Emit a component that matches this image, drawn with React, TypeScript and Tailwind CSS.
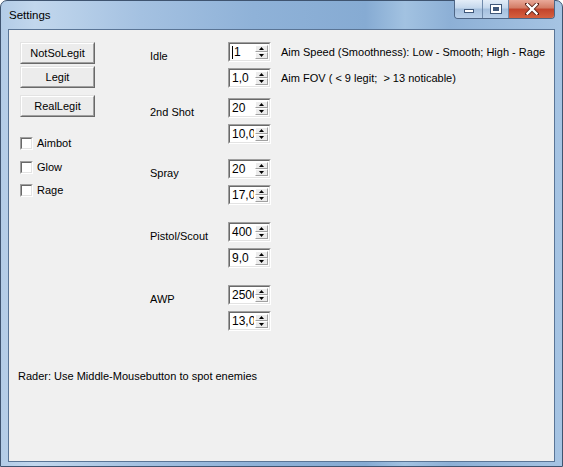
const font = { fontFamily: '"Liberation Sans", Arial, sans-serif' }

function Spin({ value, caret }: { value: string; caret?: boolean }) {
  return (
    <div className="w-[43px] h-[20px] border border-t-[#a0a0a0] border-l-[#a0a0a0] border-b-white border-r-white">
      <div className="h-full w-full flex bg-white border border-t-[#696969] border-l-[#696969] border-b-[#e3e3e3] border-r-[#e3e3e3]">
        <div className="flex-1 overflow-hidden whitespace-nowrap flex items-center pl-[2px] text-[12px] leading-[14px] text-black">
          {caret && <span className="w-px h-[13px] bg-black mr-[1px]" />}
          {value}
        </div>
        <div className="w-[15px] flex flex-col p-px bg-white">
          <SpinBtn up />
          <SpinBtn />
        </div>
      </div>
    </div>
  )
}

function SpinBtn({ up }: { up?: boolean }) {
  return (
    <div className="flex-1 flex items-center justify-center bg-[#ececec] border border-t-white border-l-white border-b-[#a0a0a0] border-r-[#a0a0a0]">
      <svg width="5" height="3" viewBox="0 0 5 3">
        {up ? <path d="M0 3 L2.5 0 L5 3 Z" fill="#000" /> : <path d="M0 0 L2.5 3 L5 0 Z" fill="#000" />}
      </svg>
    </div>
  )
}

function Btn({ label, className = '' }: { label: string; className?: string }) {
  return (
    <div className={`w-[75px] h-[22px] border border-t-[#e3e3e3] border-l-[#e3e3e3] border-b-[#696969] border-r-[#696969] ${className}`}>
      <div className="h-full w-full flex items-center justify-center bg-[#ececec] border border-t-white border-l-white border-b-[#a0a0a0] border-r-[#a0a0a0] text-[11px] text-black">
        {label}
      </div>
    </div>
  )
}

function Check({ label, className = '' }: { label: string; className?: string }) {
  return (
    <div className={`flex items-center h-[13px] ${className}`}>
      <div className="w-[13px] h-[13px] border border-t-[#a0a0a0] border-l-[#a0a0a0] border-b-white border-r-white">
        <div className="h-full w-full bg-white border border-t-[#696969] border-l-[#696969] border-b-[#e3e3e3] border-r-[#e3e3e3]" />
      </div>
      <span className="ml-[4px] text-[11px] leading-[13px] text-black">{label}</span>
    </div>
  )
}

function Group({
  label,
  a,
  b,
  caret,
  descA,
  descB,
  className = '',
}: {
  label: string
  a: string
  b: string
  caret?: boolean
  descA?: string
  descB?: string
  className?: string
}) {
  return (
    <div className={`flex ${className}`}>
      <div className="w-[78px] pt-[8px] text-[11px] leading-[13px] text-black">{label}</div>
      <div className="flex flex-col gap-[6px]">
        <div className="flex items-center">
          <Spin value={a} caret={caret} />
          {descA && <span className="ml-[10px] text-[11px] leading-[13px] text-black whitespace-pre">{descA}</span>}
        </div>
        <div className="flex items-center">
          <Spin value={b} />
          {descB && <span className="ml-[10px] text-[11px] leading-[13px] text-black whitespace-pre">{descB}</span>}
        </div>
      </div>
    </div>
  )
}

function WinControls() {
  return (
    <div className="flex h-[19px] -mt-px rounded-b-[4px] border border-t-0 border-[#4e6686] overflow-hidden">
      <div className="w-[28px] flex items-center justify-center bg-[linear-gradient(#e3edf8,#c4d7ec_45%,#a4bfdd_50%,#b9d0ea)] border-r border-[#6f8aab]">
        <div className="w-[10px] h-[4px] bg-white border border-[#40587a] mt-[4px]" />
      </div>
      <div className="w-[26px] flex items-center justify-center bg-[linear-gradient(#e3edf8,#c4d7ec_45%,#a4bfdd_50%,#b9d0ea)] border-r border-[#6f8aab]">
        <div className="w-[10px] h-[8px] border-2 border-white outline outline-1 outline-[#40587a] bg-[#40587a]" />
      </div>
      <div className="w-[45px] flex items-center justify-center bg-[linear-gradient(#e9a999,#d27a63_45%,#c2432b_50%,#d5603f)]">
        <svg width="14" height="12" viewBox="0 0 14 12">
          <path d="M2 1 L12 11 M12 1 L2 11" stroke="#5a2218" strokeWidth="4" strokeLinecap="square" />
          <path d="M2.5 1.5 L11.5 10.5 M11.5 1.5 L2.5 10.5" stroke="#ffffff" strokeWidth="2.4" strokeLinecap="square" />
        </svg>
      </div>
    </div>
  )
}

export default function App() {
  return (
    <div style={font} className="w-[563px] h-[467px] flex flex-col rounded-t-[7px] border border-[#3f5470] px-[7px] pb-[4px] bg-[linear-gradient(90deg,#b3cce7,#c2d7ed_6%,#a4c1e1_25%,#8fb2d8_45%,#86abd3_65%,#a2c2e1_72%,#8db0d6_80%,#a6c4e3_100%)]">
      <div className="h-[28px] flex justify-between">
        <span className="pt-[7px] pl-px text-[11.5px] leading-[14px] text-black">Settings</span>
        <WinControls />
      </div>
      <div className="flex-1 flex flex-col border border-[#5a7596] bg-[#f0f0f0]">
        <div className="flex pt-[12px] ml-[11px]">
          <div className="w-[130px] flex flex-col">
            <Btn label="NotSoLegit" />
            <Btn label="Legit" className="mt-[2px]" />
            <Btn label="RealLegit" className="mt-[7px]" />
            <Check label="Aimbot" className="mt-[20px]" />
            <Check label="Glow" className="mt-[11px]" />
            <Check label="Rage" className="mt-[10px]" />
          </div>
          <div className="flex flex-col">
            <Group
              label="Idle"
              a="1"
              b="1,0"
              caret
              descA="Aim Speed (Smoothness): Low - Smooth; High - Rage"
              descB="Aim FOV ( < 9 legit;  > 13 noticable)"
            />
            <Group label="2nd Shot" a="20" b="10,0" className="mt-[10px]" />
            <Group label="Spray" a="20" b="17,0" className="mt-[15px]" />
            <Group label="Pistol/Scout" a="400" b="9,0" className="mt-[17px]" />
            <Group label="AWP" a="2500" b="13,0" className="mt-[17px]" />
          </div>
        </div>
        <div className="mt-[39px] ml-[9px] text-[11px] leading-[13px] text-black">
          Rader: Use Middle-Mousebutton to spot enemies
        </div>
      </div>
    </div>
  )
}
